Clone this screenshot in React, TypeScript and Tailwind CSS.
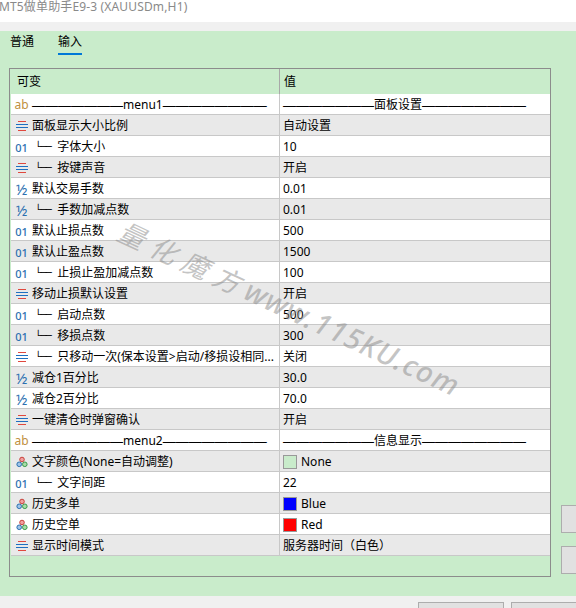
const FONT = 'font-["Noto_Sans","Noto_Sans_CJK_SC",sans-serif]';

type Kind = 'ab' | 'enum' | 'int' | 'frac' | 'color';

interface Row {
  kind: Kind;
  name: string;
  value: string;
  tree?: boolean;
  swatch?: string;
  menu?: boolean;
}

const rows: Row[] = [
  { kind: 'ab', name: 'menu1', value: '面板设置', menu: true },
  { kind: 'enum', name: '面板显示大小比例', value: '自动设置' },
  { kind: 'int', name: '字体大小', value: '10', tree: true },
  { kind: 'enum', name: '按键声音', value: '开启', tree: true },
  { kind: 'frac', name: '默认交易手数', value: '0.01' },
  { kind: 'frac', name: '手数加减点数', value: '0.01', tree: true },
  { kind: 'int', name: '默认止损点数', value: '500' },
  { kind: 'int', name: '默认止盈点数', value: '1500' },
  { kind: 'int', name: '止损止盈加减点数', value: '100', tree: true },
  { kind: 'enum', name: '移动止损默认设置', value: '开启' },
  { kind: 'int', name: '启动点数', value: '500', tree: true },
  { kind: 'int', name: '移损点数', value: '300', tree: true },
  { kind: 'enum', name: '只移动一次(保本设置>启动/移损设相同...', value: '关闭', tree: true },
  { kind: 'frac', name: '减仓1百分比', value: '30.0' },
  { kind: 'frac', name: '减仓2百分比', value: '70.0' },
  { kind: 'enum', name: '一键清仓时弹窗确认', value: '开启' },
  { kind: 'ab', name: 'menu2', value: '信息显示', menu: true },
  { kind: 'color', name: '文字颜色(None=自动调整)', value: 'None', swatch: 'bg-[#c9eccb]' },
  { kind: 'int', name: '文字间距', value: '22', tree: true },
  { kind: 'color', name: '历史多单', value: 'Blue', swatch: 'bg-[#0000ff]' },
  { kind: 'color', name: '历史空单', value: 'Red', swatch: 'bg-[#ff0000]' },
  { kind: 'enum', name: '显示时间模式', value: '服务器时间（白色）' },
];

function TypeIcon({ kind }: { kind: Kind }) {
  if (kind === 'ab') return <span className="text-[12px] leading-none text-[#c09040]">ab</span>;
  if (kind === 'int') return <span className="text-[11px] font-medium leading-none text-[#2a6fb0]">01</span>;
  if (kind === 'frac') return <span className="text-[15px] leading-none text-[#2a6fb0]">½</span>;
  if (kind === 'enum') {
    return (
      <svg width="12" height="12" viewBox="0 0 12 12">
        <path d="M2 1.5h8" stroke="#e0483e" strokeWidth="1" />
        <path d="M0 4.5h12" stroke="#1f6fc0" strokeWidth="1" />
        <path d="M0 7.5h12" stroke="#1f6fc0" strokeWidth="1" />
        <path d="M2 10.5h8" stroke="#e0483e" strokeWidth="1" />
      </svg>
    );
  }
  return (
    <svg width="12" height="12" viewBox="0 0 12 12">
      <circle cx="6" cy="3.5" r="2.3" fill="#f0a0a0" stroke="#c8403a" strokeWidth="1" />
      <circle cx="3.2" cy="8.3" r="2.3" fill="#a0c4e8" stroke="#2a6fb0" strokeWidth="1" />
      <circle cx="8.8" cy="8.3" r="2.3" fill="#a8dca8" stroke="#3a9a4a" strokeWidth="1" />
    </svg>
  );
}

function Dashes({ count }: { count: number }) {
  return <span className='font-["Liberation_Sans"] text-[13px]'>{'—'.repeat(count)}</span>;
}

function TableRow({ row, index }: { row: Row; index: number }) {
  return (
    <div className={`flex h-[21px] shrink-0 border-b border-[#c8c8c8] text-[12px] leading-none text-black ${index % 2 ? 'bg-[#e9e9e9]' : 'bg-white'}`}>
      <div className="flex w-[269px] shrink-0 items-center overflow-hidden whitespace-nowrap border-r border-[#c8c8c8] pt-[2px]">
        <span className="flex w-[21px] shrink-0 justify-start pl-[4px]"><span className="flex w-[13px] justify-center"><TypeIcon kind={row.kind} /></span></span>
        {row.menu ? (
          <span className="flex items-center"><Dashes count={7} /><span>{row.name}</span><Dashes count={8} /></span>
        ) : (
          <>
            {row.tree && <span className='mr-[6px] ml-[3px] font-["DejaVu_Sans_Mono"] text-[10px] tracking-[-0.6px]'>└──</span>}
            <span>{row.name}</span>
          </>
        )}
      </div>
      <div className="flex min-w-0 flex-1 items-center whitespace-nowrap pl-[3px] pt-[2px]">
        {row.menu ? (
          <span className="flex items-center"><Dashes count={7} /><span>{row.value}</span><Dashes count={8} /></span>
        ) : (
          <>
            {row.swatch && <span className={`mr-[4px] h-[14px] w-[14px] border border-[#999999] ${row.swatch}`} />}
            <span>{row.value}</span>
          </>
        )}
      </div>
    </div>
  );
}

export default function App() {
  return (
    <div className={`relative flex h-[608px] w-[576px] flex-col overflow-hidden bg-[#f0f0f0] ${FONT}`}>
      <div className="h-[22px] shrink-0 bg-white text-[12px] leading-[14px] tracking-[0.15px] text-[#8a8a8a]">
        <div className="-ml-px">MT5做单助手E9-3 (XAUUSDm,H1)</div>
      </div>
      <div className="h-[9px] shrink-0" />

      <div className="flex h-[565px] shrink-0 flex-col bg-[#c9eccb]">
        <div className="flex h-[24px] shrink-0 gap-[24px] pl-[10px] pt-[3px] text-[12px] leading-[16px] text-black">
          <div>普通</div>
          <div className="h-[21px] border-b-2 border-[#0078d7]">输入</div>
        </div>
        <div className="flex">
          <div className="mt-[13px] ml-[9px] flex h-[509px] w-[542px] shrink-0 flex-col border border-[#8c8c8c] pl-px">
            <div className="flex h-[25px] shrink-0 text-[12px] leading-none text-black">
              <div className="flex w-[269px] items-center border-r border-[#a8a8a8] pl-[6px] pt-px">可变</div>
              <div className="flex items-center pl-[4px] pt-px">值</div>
            </div>
            {rows.map((row, i) => <TableRow key={row.name} row={row} index={i} />)}
          </div>
          <div className="ml-[10px] mt-[450px] flex flex-col gap-[13px]">
            <div className="h-[28px] w-[40px] border border-[#adadad] bg-[#e1e1e1]" />
            <div className="h-[28px] w-[40px] border border-[#adadad] bg-[#e1e1e1]" />
          </div>
        </div>
      </div>

      <div className="mt-[6px] flex gap-[7px] pl-[418px]">
        <div className="h-[28px] w-[86px] shrink-0 border border-[#adadad] bg-[#e1e1e1]" />
        <div className="h-[28px] w-[86px] shrink-0 border border-[#adadad] bg-[#e1e1e1]" />
      </div>

      <div className="pointer-events-none absolute left-[120px] top-[207px] origin-left rotate-[25deg] whitespace-nowrap italic text-[#8a8a8a]/50">
        <span className="text-[27px] tracking-[8px]">量化魔方</span><span className="text-[29px] font-medium tracking-[1.2px]">www.115KU.com</span>
      </div>
    </div>
  );
}
